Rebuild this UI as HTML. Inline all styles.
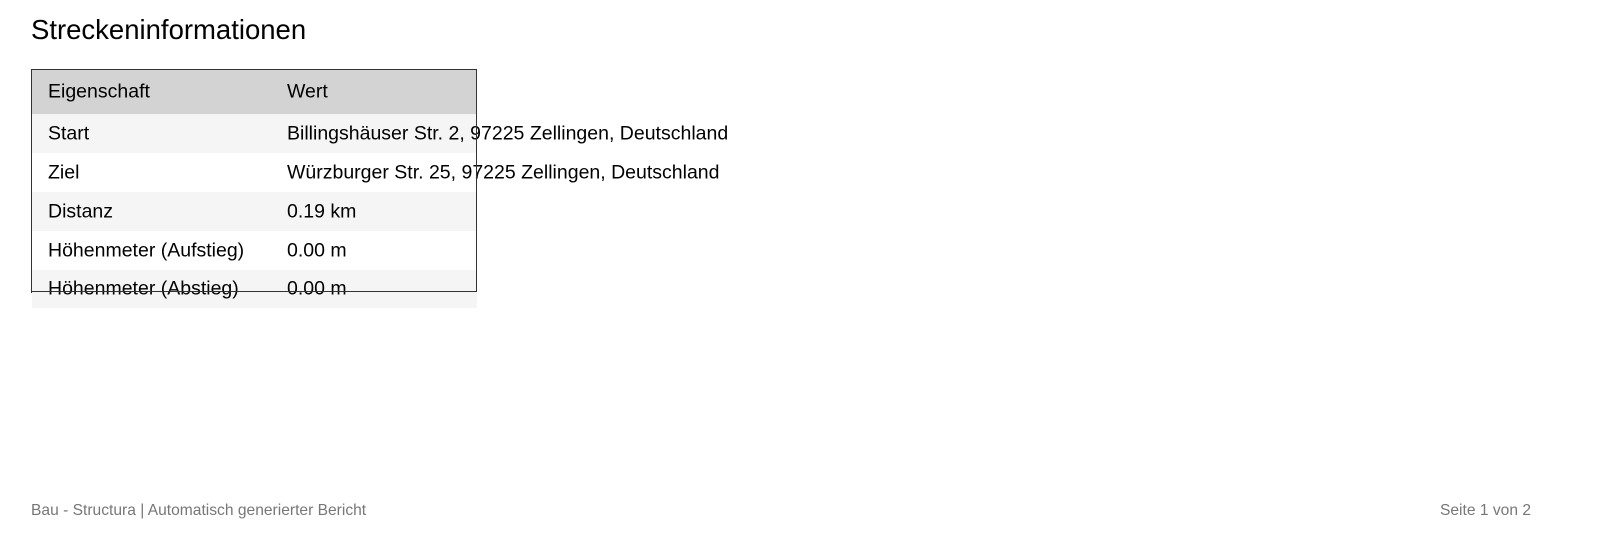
<!DOCTYPE html>
<html><head><meta charset="utf-8"><style>
body{margin:0;width:1597px;height:550px;background:#fff;font-family:"Liberation Sans",sans-serif;color:#000;position:relative;overflow:hidden}
h1{position:absolute;left:31px;top:14px;margin:0;font-size:27.5px;font-weight:normal}
.box{position:absolute;left:31px;top:69px;width:444px;height:222px;border:1px solid #333;box-sizing:content-box}
.row{position:absolute;left:0;width:444px;font-size:19.5px;white-space:nowrap}
.row span{position:absolute;top:50%;transform:translateY(-50%)}
.a{left:16px}.b{left:255px}
.ft{position:absolute;top:502px;font-size:15.6px;color:#777}
</style></head><body>
<h1>Streckeninformationen</h1>
<div class="box">
<div class="row" style="top:0;height:44px;background:#d3d3d3"><span class="a">Eigenschaft</span><span class="b">Wert</span></div>
<div class="row" style="top:44px;height:39px;background:#f5f5f5"><span class="a">Start</span><span class="b">Billingshäuser Str. 2, 97225 Zellingen, Deutschland</span></div>
<div class="row" style="top:83px;height:39px;background:#fff"><span class="a">Ziel</span><span class="b">Würzburger Str. 25, 97225 Zellingen, Deutschland</span></div>
<div class="row" style="top:122px;height:39px;background:#f5f5f5"><span class="a">Distanz</span><span class="b">0.19 km</span></div>
<div class="row" style="top:161px;height:39px;background:#fff"><span class="a">Höhenmeter (Aufstieg)</span><span class="b">0.00 m</span></div>
<div class="row" style="top:200px;height:38px;width:445px;background:#f5f5f5"><span class="a">Höhenmeter (Abstieg)</span><span class="b">0.00 m</span></div>
</div>
<div style="position:absolute;left:31px;top:291px;width:446px;height:1px;background:#333;z-index:5"></div>
<div style="position:absolute;left:476px;top:69px;width:1px;height:223px;background:#333;z-index:5"></div>
<div class="ft" style="left:31px">Bau - Structura | Automatisch generierter Bericht</div>
<div class="ft" style="right:66px">Seite 1 von 2</div>
</body></html>
